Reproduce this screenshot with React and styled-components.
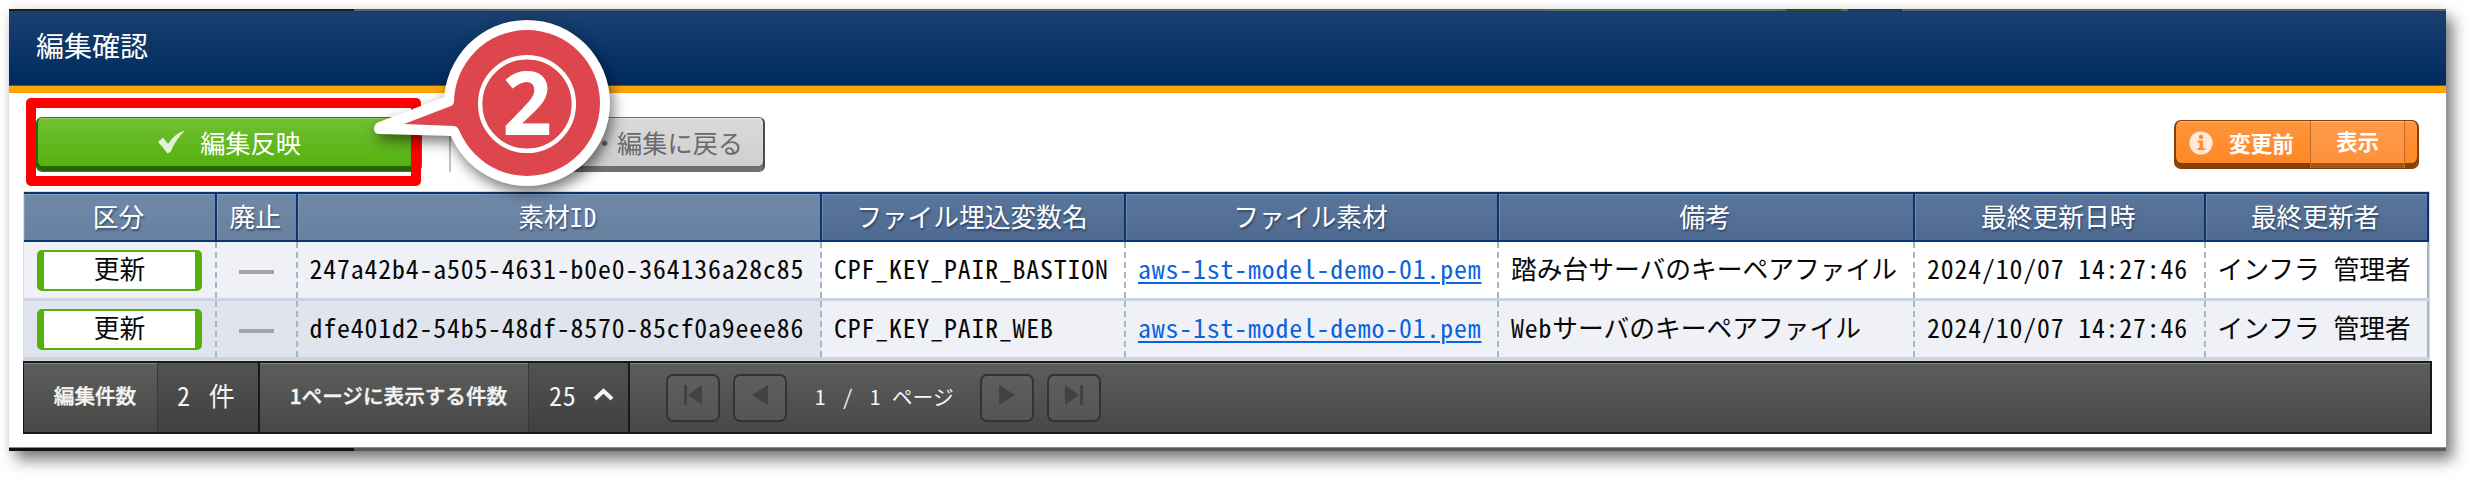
import React from "react";
import styled, { createGlobalStyle } from "styled-components";

const GlobalStyle = createGlobalStyle`
  * { box-sizing: border-box; }
  body {
    margin: 0;
    background: #fff;
    overflow: hidden;
    font-family: "Noto Sans CJK JP", sans-serif;
  }
`;

const Page = styled.main`
  width: 2475px;
  height: 480px;
  padding: 9px 0 0 9px;
`;

const Dialog = styled.section`
  position: relative;
  width: 2437px;
  height: 442px;
  display: flex;
  flex-direction: column;
  background: #fff;
  box-shadow: 7px 9px 14px rgba(0, 0, 0, 0.5), 0 0 10px rgba(0, 0, 0, 0.08);
`;

const TopEdge = styled.div`
  flex: none;
  height: 2px;
  background: linear-gradient(
    90deg,
    #1c1e20 0 345px,
    #5e6063 345px 1540px,
    #5d6c60 1540px 1768px,
    #5e6063 1768px 1777px,
    #29501d 1777px 1832px,
    #5e6063 1832px 1839px,
    #123c60 1839px 1893px,
    #5e6063 1893px
  );
`;

const BottomEdge = styled.div`
  flex: none;
  height: 4px;
  margin-top: auto;
  border-top: 1px solid #8b8b8b;
  background: linear-gradient(90deg, #101010 0 345px, #58595a 345px);
`;

const TitleBar = styled.header`
  flex: none;
  height: 82px;
  padding: 0 27px 8px;
  display: flex;
  align-items: center;
  color: #fff;
  font-size: 28px;
  line-height: 40px;
  background: linear-gradient(#194070, #002a5e);
  border-bottom: 7px solid #ffa405;
  box-shadow: inset 0 -1px 0 #6b571f;
`;

const Toolbar = styled.div`
  flex: none;
  height: 98px;
  padding: 24px 28px 0 27px;
  display: flex;
  align-items: flex-start;
`;

const ToolButton = styled.button`
  height: 55px;
  padding: 0 0 5px;
  display: flex;
  align-items: center;
  justify-content: center;
  font-family: inherit;
  font-size: 25.2px;
  line-height: 30px;
  border-radius: 6px;
`;

const ApplyButton = styled(ToolButton)`
  width: 386px;
  gap: 14px;
  color: #fff;
  padding-right: 1px;
  background: linear-gradient(#70c033, #55b20d 92%);
  border: 1px solid #49721f;
  border-left: 2px solid #2f6409;
  box-shadow: inset 0 1px 0 #8fce5e, inset 0 -5px 0 #286307;
`;

const Separator = styled.div`
  width: 2px;
  height: 55px;
  margin: 0 39px 0 27px;
  background: #c2c2c2;
`;

const BackButton = styled(ToolButton)`
  width: 275px;
  justify-content: flex-end;
  padding-right: 20px;
  color: #6a6a6a;
  background: linear-gradient(#dadada, #cecece);
  border: 1px solid #6f6f6f;
  border-right: 2px solid #4c4c4c;
  box-shadow: inset 0 1px 0 #e8e8e8, inset 0 -5px 0 #707070;
`;

const BeforeButton = styled.button`
  width: 245px;
  height: 49px;
  margin: 3px -1px 0 auto;
  padding: 0;
  display: flex;
  overflow: hidden;
  color: #fff;
  font-family: inherit;
  font-size: 21.6px;
  font-weight: 700;
  line-height: 30px;
  border: 1px solid #81420f;
  border-left-width: 2px;
  border-right-width: 2px;
  border-radius: 7px;
  background: linear-gradient(#ff953e, #ff8620);
  box-shadow: inset 0 1px 0 #ffb273, inset 0 -5px 0 #854007;
`;

const BeforeLabel = styled.span`
  width: 134px;
  height: 43px;
  padding: 0 0 0 13px;
  display: flex;
  align-items: center;
  gap: 16px;
`;

const BeforeAction = styled.span`
  width: 95px;
  height: 47px;
  padding-bottom: 8px;
  display: flex;
  align-items: center;
  justify-content: center;
  border: 1px solid #c16a2b;
  border-width: 0 1px;
  background: linear-gradient(#ff9c4c, #ff8f37);
  box-shadow: inset 0 1px 0 #ffb980, inset 0 -5px 0 #a3571d;
`;

const Grid = styled.div`
  flex: none;
  width: 2407px;
  margin-left: 14px;
  border: 1px solid #dcdcdc;
  font-size: 25.75px;
  line-height: 36px;
`;

const GridRow = styled.div`
  display: grid;
  grid-template-columns: 193px 80.5px 524.5px 304px 373px 416px 290.5px 223.5px;
`;

const HeadRow = styled(GridRow)`
  height: 50px;
  border: 2px solid #0b356d;
  border-width: 2px 0;
`;

const HeadCell = styled.div`
  display: flex;
  align-items: center;
  justify-content: center;
  padding: 0 2px 3px 0;
  color: #fff;
  text-shadow: 1px 2px 2px rgba(20, 40, 70, 0.55);
  background: ${(p) =>
    p.$muted ? "linear-gradient(#7089aa, #67809f)" : "linear-gradient(#5a769c, #4e6a90)"};
  border-right: 2px solid #0b356d;
  box-shadow: inset 1px 1px 0 rgba(255, 255, 255, 0.18);
`;

const BodyRow = styled(GridRow)`
  height: 59px;
  border-bottom: 3px solid #cad3df;
`;

const BodyCell = styled.div`
  display: flex;
  align-items: center;
  justify-content: ${(p) => (p.$center ? "center" : "flex-start")};
  padding: 0 0 4px ${(p) => (p.$center ? 0 : 12)}px;
  color: #080808;
  white-space: pre;
  background: ${(p) =>
    p.$alt ? (p.$muted ? "#e0e5ed" : "#f0f1f6") : p.$muted ? "#f0f1f6" : "#fff"};
  border-right: 2px dashed #a5b6cb;
  &:last-child { border-right-style: solid; }
`;

const Badge = styled.span`
  width: 165px;
  height: 41px;
  margin-top: 4px;
  padding-bottom: 4px;
  display: flex;
  align-items: center;
  justify-content: center;
  background: #fff;
  border: solid #55b00c;
  border-width: 2px 7px;
  border-radius: 5px;
`;

const Dash = styled.span`
  width: 35px;
  height: 4px;
  margin-top: 7px;
  background: #a2a4a8;
`;

const Half = styled.span`
  font-feature-settings: "hwid";
  letter-spacing: 0.865px;
`;

const FileLink = styled.a`
  color: #0b63dc;
  text-decoration: underline;
  text-decoration-thickness: 2px;
  text-underline-offset: 3px;
`;

const Pager = styled.footer`
  flex: none;
  width: 2409px;
  height: 73px;
  margin-left: 14px;
  display: flex;
  color: #f4f4f4;
  border: 2px solid #191919;
  border-left-width: 1px;
  background: linear-gradient(#5c5e5c, #474847);
  box-shadow: inset 0 1px 0 #858585;
`;

const PagerLabel = styled.div`
  width: ${(p) => p.$width}px;
  padding: 0 0 5px 9px;
  display: flex;
  align-items: center;
  justify-content: center;
  font-size: 20.6px;
  font-weight: 500;
  -webkit-text-stroke: 0.4px #f4f4f4;
  border-right: 1px solid #373837;
`;

const PagerValue = styled.div`
  width: ${(p) => p.$width}px;
  padding: 0 0 6px ${(p) => p.$left}px;
  display: flex;
  align-items: center;
  gap: 16px;
  font-size: 26px;
  white-space: pre;
  background: linear-gradient(#515251, #3f403f);
  border-right: 2px solid #191919;
`;

const Unit = styled.span`
  margin-left: 4px;
`;

const PageControls = styled.nav`
  display: flex;
  padding: 11px 0 0 36px;
`;

const PageButton = styled.button`
  width: 54px;
  height: 48px;
  margin-right: 13px;
  padding: 0 0 6px;
  display: flex;
  align-items: center;
  justify-content: center;
  color: #424242;
  background: linear-gradient(#5d5e5d, #545554);
  border: 2px solid #323432;
  border-radius: 7px;
`;

const PageText = styled.span`
  width: 180px;
  height: 48px;
  padding: 0 0 4px 15px;
  display: flex;
  align-items: center;
  gap: 8px;
  font-size: 20.8px;
  white-space: pre;
  ${Half} { letter-spacing: 3.35px; }
`;

const Highlight = styled.div`
  position: absolute;
  left: 17px;
  top: 89px;
  width: 395px;
  height: 88px;
  border: 10px solid #f00;
  border-radius: 5px;
`;

const Callout = styled.svg`
  position: absolute;
  left: 351px;
  top: 1px;
  width: 270px;
  height: 200px;
  filter: drop-shadow(3px 6px 7px rgba(0, 0, 0, 0.55));
`;

const CheckIcon = () => (
  <svg width="29" height="24" viewBox="0 0 29 24">
    <path d="M1 12 6 7.5 11 14 Q17 4 28 .5 Q19 9 13.5 22 L10.5 23.5 Q6 17 1 12Z" fill="#fff" opacity=".82" />
  </svg>
);

const InfoIcon = () => (
  <svg width="24" height="24" viewBox="0 0 24 24">
    <circle cx="12" cy="12" r="11.6" fill="#fff" opacity=".82" />
    <circle cx="12" cy="6" r="2.3" fill="#ff8f35" />
    <path d="M8.5 9.5H14V17H16V19H8.5V17H10.5V11.5H8.5Z" fill="#ff8f35" />
  </svg>
);

const ChevronUp = () => (
  <svg width="21" height="13" viewBox="0 0 21 13">
    <path d="M2 11 10.5 3 19 11" fill="none" stroke="#f4f4f4" strokeWidth="4" />
  </svg>
);

const StepIcon = ({ flip, bar }) => (
  <svg width="20" height="20" viewBox="0 0 20 20">
    <g transform={flip ? "matrix(-1 0 0 1 20 0)" : undefined} fill="currentColor">
      {bar ? <path d="M1 0H4V20H1ZM5 10 19 0V20Z" /> : <path d="M2 10 18 0V20Z" />}
    </g>
  </svg>
);

const columns = ["区分", "廃止", "素材ID", "ファイル埋込変数名", "ファイル素材", "備考", "最終更新日時", "最終更新者"];

const rows = [
  {
    id: "247a42b4-a505-4631-b0e0-364136a28c85",
    variable: "CPF_KEY_PAIR_BASTION",
    noteHalf: "",
    note: "踏み台サーバのキーペアファイル",
  },
  {
    id: "dfe401d2-54b5-48df-8570-85cf0a9eee86",
    variable: "CPF_KEY_PAIR_WEB",
    noteHalf: "Web",
    note: "サーバのキーペアファイル",
  },
];

export default function App() {
  return (
    <Page>
      <GlobalStyle />
      <Dialog>
        <TopEdge />
        <TitleBar>編集確認</TitleBar>
        <Toolbar>
          <ApplyButton><CheckIcon />編集反映</ApplyButton>
          <Separator />
          <BackButton>・編集に戻る</BackButton>
          <BeforeButton>
            <BeforeLabel><InfoIcon />変更前</BeforeLabel>
            <BeforeAction>表示</BeforeAction>
          </BeforeButton>
        </Toolbar>
        <Grid>
          <HeadRow>
            {columns.map((name, i) => (
              <HeadCell key={name} $muted={i < 3}>
                {name === "素材ID" ? <span>素材<Half>ID</Half></span> : name}
              </HeadCell>
            ))}
          </HeadRow>
          {rows.map((row, i) => {
            const alt = i % 2 === 1;
            return (
              <BodyRow key={row.id}>
                <BodyCell $muted $alt={alt} $center><Badge>更新</Badge></BodyCell>
                <BodyCell $muted $alt={alt} $center><Dash /></BodyCell>
                <BodyCell $muted $alt={alt}><Half>{row.id}</Half></BodyCell>
                <BodyCell $alt={alt}><Half>{row.variable}</Half></BodyCell>
                <BodyCell $alt={alt}>
                  <FileLink><Half>aws-1st-model-demo-01.pem</Half></FileLink>
                </BodyCell>
                <BodyCell $alt={alt}><Half>{row.noteHalf}</Half>{row.note}</BodyCell>
                <BodyCell $alt={alt}><Half>2024/10/07 14:27:46</Half></BodyCell>
                <BodyCell $alt={alt}>インフラ<Half> </Half>管理者</BodyCell>
              </BodyRow>
            );
          })}
        </Grid>
        <Pager>
          <PagerLabel $width={134}>編集件数</PagerLabel>
          <PagerValue $width={102} $left={19}><span><Half>2 </Half><Unit>件</Unit></span></PagerValue>
          <PagerLabel $width={269}>1ページに表示する件数</PagerLabel>
          <PagerValue $width={101} $left={20}><Half>25</Half><ChevronUp /></PagerValue>
          <PageControls>
            <PageButton><StepIcon bar /></PageButton>
            <PageButton><StepIcon /></PageButton>
            <PageText><Half>1 / 1</Half>ページ</PageText>
            <PageButton><StepIcon flip /></PageButton>
            <PageButton><StepIcon flip bar /></PageButton>
          </PageControls>
        </Pager>
        <BottomEdge />
        <Highlight />
        <Callout viewBox="360 10 270 200">
          <circle cx="527" cy="103" r="83" fill="#fff" />
          <path d="M447 96 377.5 122.5Q374 125 374 128.5Q374 134 380 134L453 136Q458 136 461 142L480 120Z" fill="#fff" />
          <circle cx="527" cy="103" r="73" fill="#dc464c" />
          <path d="M404 124 451 106Q454 105 454 101L470 115 461 134Q458 126 454 126Z" fill="#dc464c" />
          <circle cx="527" cy="104" r="46.8" fill="none" stroke="#fff" strokeWidth="4.4" />
          <text x="527" y="135" textAnchor="middle" fontFamily="Open Sans, sans-serif" fontWeight="700" fontSize="87" fill="#fff">2</text>
        </Callout>
      </Dialog>
    </Page>
  );
}
